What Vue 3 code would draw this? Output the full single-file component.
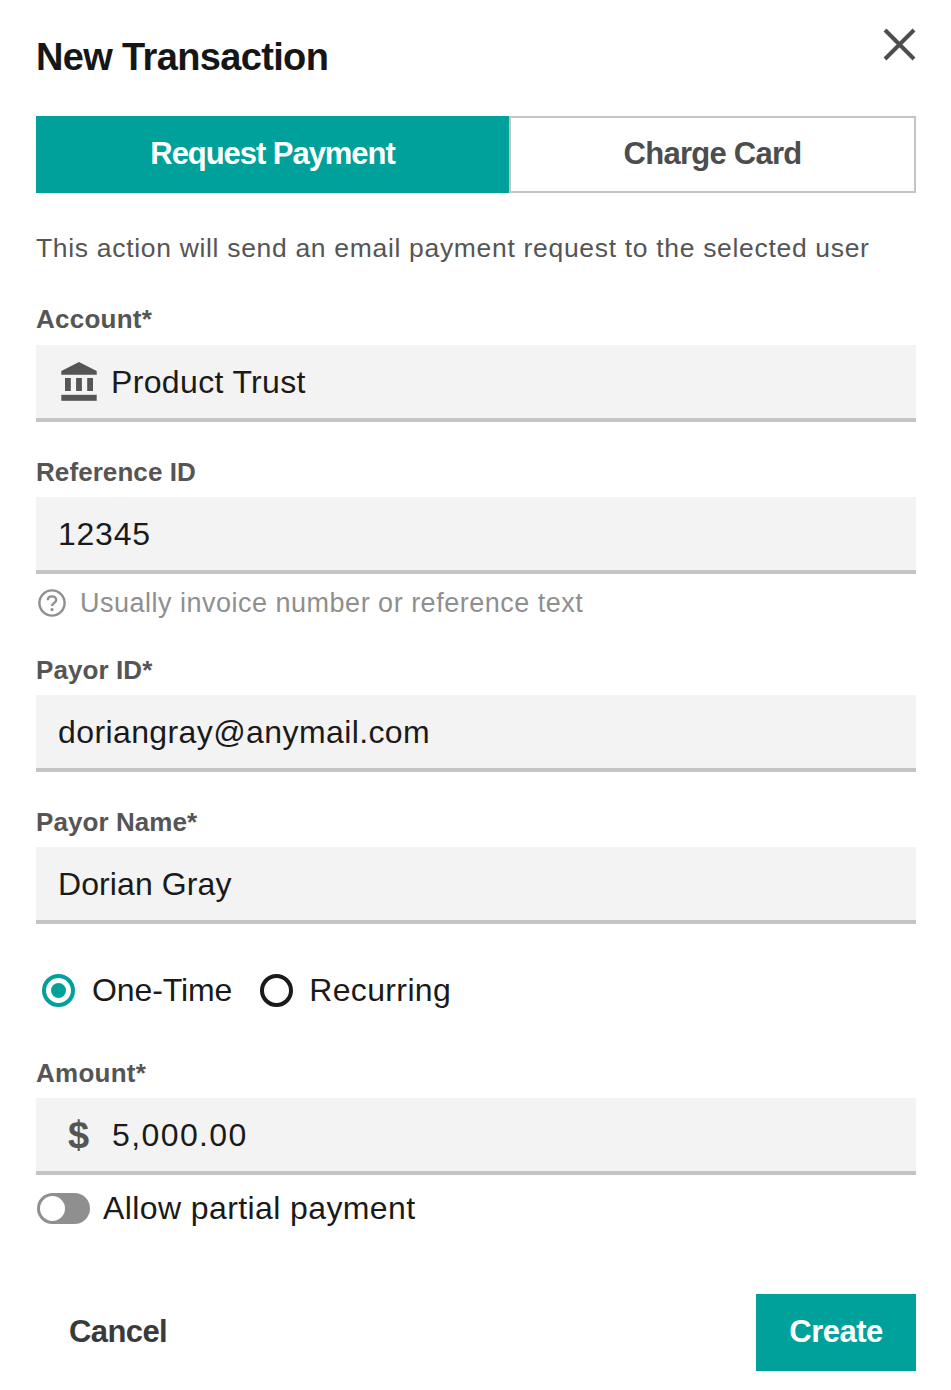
<script setup>
</script>

<template>
  <div class="modal">
    <header class="head">
      <h1 class="title">New Transaction</h1>
      <svg class="close" viewBox="0 0 34 34" width="34" height="34"><path d="M3 3 L32 32 M32 3 L3 32" stroke="#4d4d4d" stroke-width="4" fill="none" /></svg>
    </header>
    <div class="tabs">
      <div class="tab active">Request Payment</div>
      <div class="tab">Charge Card</div>
    </div>
    <p class="desc">This action will send an email payment request to the selected user</p>

    <div class="label l-account">Account*</div>
    <div class="input with-icon">
      <svg class="bank" viewBox="0 0 36 39" width="36" height="39">
        <path d="M18 0 L35.7 9 V12.7 H0.3 V9 Z" fill="#555" />
        <rect x="4" y="16" width="5.8" height="13" fill="#555" />
        <rect x="15.1" y="16" width="5.8" height="13" fill="#555" />
        <rect x="26.2" y="16" width="5.8" height="13" fill="#555" />
        <rect x="0.3" y="32.8" width="35.4" height="6" fill="#555" />
      </svg>
      <span>Product Trust</span>
    </div>

    <div class="label l-next narrow">Reference ID</div>
    <div class="input digits">12345</div>
    <div class="help">
      <svg viewBox="0 0 28 28" width="28" height="28">
        <circle cx="14" cy="14" r="12.6" fill="none" stroke="#8f8f8f" stroke-width="2.4" />
        <path d="M9.8 11.2 C9.8 8.6 11.8 7.3 14 7.3 C16.4 7.3 18.2 8.8 18.2 11 C18.2 14 14 14 14 17" fill="none" stroke="#8f8f8f" stroke-width="2.3" />
        <circle cx="14" cy="20.6" r="1.6" fill="#8f8f8f" />
      </svg>
      <span>Usually invoice number or reference text</span>
    </div>

    <div class="label l-payor narrow">Payor ID*</div>
    <div class="input email">doriangray@anymail.com</div>

    <div class="label l-next narrow">Payor Name*</div>
    <div class="input name">Dorian Gray</div>

    <div class="radios">
      <span class="radio on"></span><span class="radio-text tight">One-Time</span>
      <span class="radio second"></span><span class="radio-text recurring">Recurring</span>
    </div>

    <div class="label l-amount">Amount*</div>
    <div class="input with-icon amount">
      <span class="dollar">$</span>
      <span class="digits">5,000.00</span>
    </div>

    <div class="toggle-row">
      <span class="toggle"><span class="knob"></span></span>
      <span>Allow partial payment</span>
    </div>

    <footer class="foot">
      <div class="cancel">Cancel</div>
      <div class="create">Create</div>
    </footer>
  </div>
</template>

<style scoped>
.modal {
  width: 951px;
  height: 1390px;
  box-sizing: border-box;
  padding: 0 35px 0 36px;
  background: #fff;
  font-family: "Liberation Sans", Arial, sans-serif;
  color: #1a1a1a;
  overflow: hidden;
}
.head {
  height: 116px;
  display: flex;
  justify-content: space-between;
  align-items: flex-start;
}
.title {
  margin: 35px 0 0;
  font-size: 38px;
  line-height: 44px;
  font-weight: 700;
  letter-spacing: -0.65px;
  color: #161616;
}
.close { margin-top: 27px; }
.tabs { display: flex; height: 77px; }
.tab {
  box-sizing: border-box;
  display: flex;
  align-items: center;
  justify-content: center;
  font-size: 31px;
  font-weight: 700;
  letter-spacing: -0.75px;
  color: #4d4d4d;
  flex: 1;
  border: 2px solid #c4c4c4;
  padding-bottom: 2px;
}
.tab.active {
  flex: 0 0 473px;
  background: #00a19a;
  border: 0;
  letter-spacing: -1.05px;
  color: #fff;
}
.desc {
  margin: 39px 0 0;
  font-size: 26.5px;
  line-height: 32px;
  letter-spacing: 0.68px;
  color: #555;
}
.label {
  font-size: 26px;
  line-height: 30px;
  font-weight: 700;
  letter-spacing: 0.25px;
  color: #555;
  height: 30px;
  margin-bottom: 10px;
}
.label.narrow { letter-spacing: 0.08px; }
.l-account { margin-top: 40px; margin-bottom: 11px; }
.l-next { margin-top: 35px; }
.l-payor { margin-top: 37px; }
.l-amount { margin-top: 50px; }
.input {
  box-sizing: border-box;
  height: 77px;
  background: #f3f3f3;
  border-bottom: 4px solid #c4c4c4;
  padding: 2px 0 0 22px;
  display: flex;
  align-items: center;
  font-size: 32px;
  letter-spacing: 0.35px;
  color: #1a1a1a;
}
.email { letter-spacing: 0.4px; }
.name { letter-spacing: 0.1px; }
.digits { letter-spacing: 0.75px; }
.amount .digits { letter-spacing: 1.4px; }
.with-icon { padding-left: 25px; }
.bank { margin: -2px 14px 0 0; }
.amount { padding-left: 32px; }
.dollar {
  font-size: 38px;
  font-weight: 700;
  color: #555;
  width: 44px;
  letter-spacing: 0;
}
.help {
  display: flex;
  align-items: center;
  height: 30px;
  margin-top: 14px;
  padding-left: 2px;
  font-size: 27px;
  letter-spacing: 0.5px;
  color: #8f8f8f;
}
.help svg { margin-right: 14px; }
.radios {
  display: flex;
  align-items: center;
  height: 36px;
  margin-top: 48px;
  padding-left: 6px;
  font-size: 32px;
  letter-spacing: 0.35px;
}
.radio {
  box-sizing: border-box;
  width: 33px;
  height: 33px;
  border-radius: 50%;
  border: 4px solid #1a1a1a;
  position: relative;
  flex: none;
}
.radio.on { border-color: #00a19a; }
.radio.on::after {
  content: "";
  position: absolute;
  inset: 5px;
  border-radius: 50%;
  background: #00a19a;
}
.radio-text { margin-left: 17px; }
.radio-text.tight { letter-spacing: -0.1px; }
.radio-text.recurring { margin-left: 16px; }
.radio.second { margin-left: 28px; }
.toggle-row {
  display: flex;
  align-items: center;
  height: 36px;
  margin-top: 15px;
  font-size: 32px;
  letter-spacing: 0.4px;
}
.toggle {
  box-sizing: border-box;
  width: 53px;
  height: 31px;
  margin-left: 1px;
  border-radius: 16px;
  background: #8f8f8f;
  padding: 3px;
  margin-right: 13px;
  flex: none;
}
.knob {
  display: block;
  width: 25px;
  height: 25px;
  border-radius: 50%;
  background: #fff;
}
.foot {
  display: flex;
  justify-content: space-between;
  align-items: center;
  height: 77px;
  margin-top: 68px;
}
.cancel {
  padding: 0 0 2px 33px;
  font-size: 31px;
  font-weight: 700;
  letter-spacing: -0.6px;
  color: #3a3a3a;
}
.create {
  box-sizing: border-box;
  width: 160px;
  height: 77px;
  padding-bottom: 2px;
  background: #00a19a;
  color: #fff;
  display: flex;
  align-items: center;
  justify-content: center;
  font-size: 31px;
  font-weight: 700;
  letter-spacing: -0.5px;
}
</style>
